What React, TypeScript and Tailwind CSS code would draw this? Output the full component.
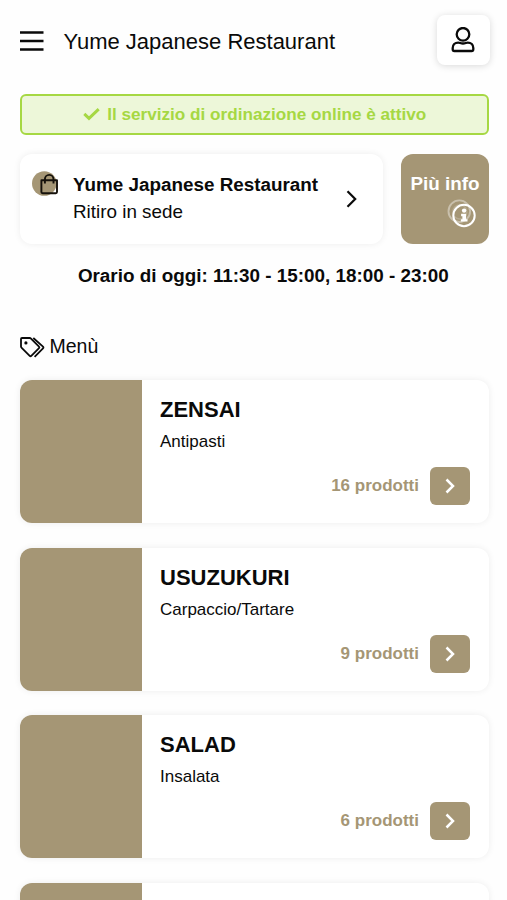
import { memo } from "react";

const categories = [
  { name: "ZENSAI", description: "Antipasti", count: 16 },
  { name: "USUZUKURI", description: "Carpaccio/Tartare", count: 9 },
  { name: "SALAD", description: "Insalata", count: 6 },
  { name: "", description: "", count: 0 },
];

const MenuIcon = () => (
  <svg width="24" height="22" viewBox="0 0 24 22" fill="#0a0a0a">
    <path d="M0 1.200h23.500v2.600H0zM0 9.700h23.500v2.600H0zM0 18.200h23.500v2.600H0z" />
  </svg>
);

const UserIcon = () => (
  <svg width="24" height="26" viewBox="0 0 24 26" fill="none" stroke="#0a0a0a" strokeWidth="2.300">
    <circle cx="12" cy="7.300" r="6.300" />
    <path
      d="M7.200 15.600C3.900 15.600 1.700 17.900 1.700 21v1.300c0 1 .7 1.700 1.700 1.700h17.200c1 0 1.700-.7 1.700-1.700V21c0-3.100-2.200-5.400-5.500-5.400-1.500 0-2.600.9-4.800.9s-3.300-.9-4.800-.9z"
      strokeLinejoin="round"
    />
  </svg>
);

const CheckIcon = () => (
  <svg width="17" height="13" viewBox="0 0 17 13" fill="none" stroke="#a6d843" strokeWidth="3">
    <path d="M1.300 5.900l4.700 4.500L15.700 1.200" />
  </svg>
);

const BagIcon = () => (
  <svg width="28" height="26" viewBox="0 0 28 26" fill="none">
    <circle cx="12.300" cy="12.500" r="12.300" fill="#a59675" />
    <path d="M9.400 9.200h15.600v11.800q0 1.200-1.200 1.200H10.600q-1.200 0-1.200-1.200z" stroke="#15110b" strokeWidth="1.900" strokeLinejoin="round" />
    <path d="M12.900 12.600V8.200a4.300 4.300 0 0 1 8.600 0v4.400" stroke="#15110b" strokeWidth="1.900" />
  </svg>
);

const InfoIcon = () => (
  <svg width="30" height="30" viewBox="0 0 30 30" fill="none">
    <circle cx="12.300" cy="12.200" r="10.800" stroke="#fff" strokeOpacity=".4" strokeWidth="1.900" />
    <circle cx="12.800" cy="13" r="7" stroke="#fff" strokeOpacity=".2" strokeWidth="1.500" />
    <circle cx="17" cy="16.500" r="10.700" stroke="#fff" strokeWidth="2" />
    <circle cx="17.100" cy="11.600" r="2.200" fill="#fff" />
    <path d="M14.100 14.800h5v5.400h1.400v2.400h-6.600v-2.400h1.500v-3h-1.300z" fill="#fff" />
  </svg>
);

const TagsIcon = () => (
  <svg width="25" height="21" viewBox="0 0 25 21" fill="none" stroke="#0a0a0a" strokeWidth="1.800" strokeLinejoin="round">
    <path d="M2 1h7.600q.8 0 1.400.6l8 8q.8.8 0 1.600l-7.700 7.700q-.8.8-1.600 0l-8-8Q1 10.200 1 9.400V2q0-1 1-1z" />
    <path d="M13.300 1l9.700 8.700q.8.800 0 1.600l-8.400 8.500" />
    <circle cx="5.900" cy="5.900" r="1.600" fill="#0a0a0a" stroke="none" />
  </svg>
);

const CategoryCard = ({ category }) => (
  <div className="flex h-[143px] shrink-0 overflow-hidden rounded-xl bg-white shadow-[0_0_7px_rgba(0,0,0,0.07)]">
    <div className="w-[122px] shrink-0 bg-[#a59675]" />
    <div className="flex flex-1 flex-col pt-[17px] pr-[19px] pb-[18px] pl-[18.500px]">
      <h2 className="text-[22px] leading-[26px] font-bold">{category.name}</h2>
      <p className="mt-[9px] text-[17px] leading-5">{category.description}</p>
      {category.count > 0 && (
        <div className="mt-auto flex items-center justify-end gap-[11px]">
          <span className="text-[17px] leading-5 font-bold text-[#a59675]">{category.count} prodotti</span>
          <button className="flex h-[38px] w-10 items-center justify-center rounded-md bg-[#a59675]">
            <svg width="11" height="16" viewBox="0 0 11 16" fill="none" stroke="#fff" strokeWidth="2.500">
              <path d="M1.500 1.500L8 8l-6.500 6.500" />
            </svg>
          </button>
        </div>
      )}
    </div>
  </div>
);

const App = () => {
  return (
    <div className="h-[900px] w-full overflow-hidden bg-[#fefefe] pr-[18px] pl-[19.500px] font-['Liberation_Sans',Arial,sans-serif] text-[#0a0a0a]">
      <header className="flex h-[82px] items-center">
        <MenuIcon />
        <h1 className="ml-[20px] pt-px text-[22px] leading-7">Yume Japanese Restaurant</h1>
        <button className="mr-[-1px] mb-0.5 ml-auto flex h-[50px] w-[53px] items-center justify-center rounded-lg bg-white pr-px shadow-[0_1px_7px_rgba(0,0,0,0.15)]">
          <UserIcon />
        </button>
      </header>

      <div className="mt-3 flex h-[41px] items-center justify-center gap-[7px] rounded-md border-2 border-[#a6d843] bg-[#edf7d9] pl-px text-[17.150px] font-bold text-[#a6d843]">
        <CheckIcon />
        <span>Il servizio di ordinazione online è attivo</span>
      </div>

      <section className="mt-[19px] flex h-[89.500px] gap-[18px]">
        <div className="flex flex-1 items-center rounded-xl bg-white pr-[26px] pl-[12.500px] shadow-[0_0_7px_rgba(0,0,0,0.07)]">
          <div className="mb-[29px]">
            <BagIcon />
          </div>
          <div className="mb-px ml-[13px] text-[18.850px] leading-[27px] whitespace-nowrap">
            <p className="font-bold">Yume Japanese Restaurant</p>
            <p>Ritiro in sede</p>
          </div>
          <svg className="ml-auto" width="11" height="18" viewBox="0 0 11 18" fill="none" stroke="#0a0a0a" strokeWidth="2.200">
            <path d="M1.500 1.300L9.200 9l-7.700 7.700" />
          </svg>
        </div>
        <button className="flex w-[88px] flex-col rounded-xl bg-[#a59675] px-[9px] pt-[18px] text-white">
          <span className="text-[18.850px] leading-6 font-bold whitespace-nowrap">Più info</span>
          <span className="mt-[3px] mr-[3px] self-end">
            <InfoIcon />
          </span>
        </button>
      </section>

      <p className="mt-[20.500px] pl-[18px] text-center text-[18.850px] leading-6 font-bold">Orario di oggi: 11:30 - 15:00, 18:00 - 23:00</p>

      <div className="mt-[47px] flex h-6 items-center gap-[5px] text-[19.500px]">
        <TagsIcon />
        <span>Menù</span>
      </div>

      <main className="mt-[21px] flex flex-col gap-[24.500px]">
        {categories.map((category, i) => (
          <CategoryCard key={i} category={category} />
        ))}
      </main>
    </div>
  );
};

export default memo(App);
